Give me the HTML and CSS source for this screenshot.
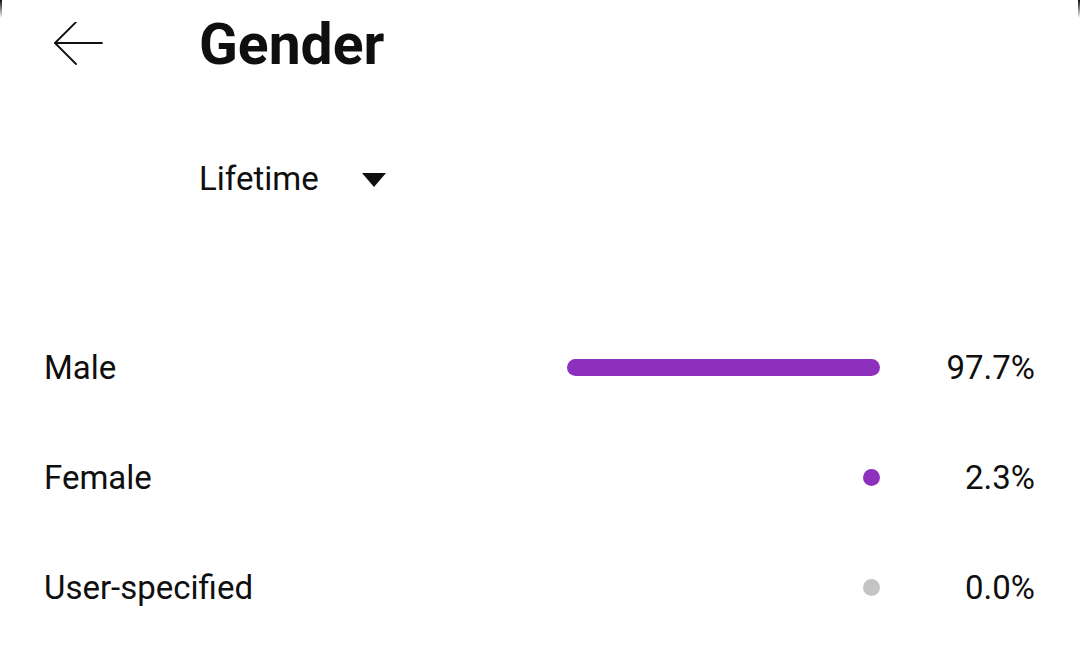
FILE: index.html
```html
<!DOCTYPE html>
<html lang="en">
<head>
<meta charset="utf-8">
<title>Gender</title>
<link rel="stylesheet" href="styles.css">
</head>
<body>
<div class="screen">
  <span class="edge edge-left"></span>
  <span class="edge edge-right"></span>
  <header class="header">
    <button class="back" aria-label="Back">
      <svg width="50" height="44" viewBox="0 0 50 44" fill="none" stroke="#111" stroke-width="1.8" stroke-linecap="round" stroke-linejoin="round">
        <path d="M1 21 H48"/>
        <path d="M22 0 L1 21 L22 42"/>
      </svg>
    </button>
    <h1 class="title">Gender</h1>
  </header>
  <div class="dropdown">
    <span class="dropdown-label">Lifetime</span>
    <span class="caret"></span>
  </div>
  <section class="rows">
    <div class="row">
      <span class="label">Male</span>
      <span class="track"><span class="bar" style="width:97.7%"></span></span>
      <span class="value">97.7%</span>
    </div>
    <div class="row">
      <span class="label">Female</span>
      <span class="track"><span class="bar" style="width:2.3%"></span></span>
      <span class="value">2.3%</span>
    </div>
    <div class="row">
      <span class="label">User-specified</span>
      <span class="track"><span class="bar bar-empty" style="width:0%"></span></span>
      <span class="value">0.0%</span>
    </div>
  </section>
</div>
</body>
</html>
```
FILE: styles.css
```css
* { box-sizing: border-box; }
html, body {
  margin: 0;
  padding: 0;
  background: #fff;
}
body {
  font-family: Roboto, "Noto Sans", "Liberation Sans", sans-serif;
  color: #0f0f0f;
}
.screen {
  position: relative;
  width: 1080px;
  height: 645px;
  overflow: hidden;
  background: #fff;
}
.edge {
  position: absolute;
  top: 0;
  width: 2px;
  height: 18px;
  background: linear-gradient(#111, rgba(0,0,0,0));
}
.edge-left { left: 0; }
.edge-right { right: 0; }

.header {
  display: flex;
  align-items: center;
  height: 88px;
}
.back {
  margin: 0 0 0 54px;
  padding: 0;
  border: 0;
  background: none;
  width: 50px;
  height: 44px;
  display: flex;
}
.title {
  margin: 0 0 0 95px;
  font-size: 57px;
  font-weight: 700;
  line-height: 1;
  letter-spacing: 0;
  color: #0f0f0f;
}
.dropdown {
  display: flex;
  align-items: center;
  height: 40px;
  margin: 70px 0 0 199px;
}
.dropdown-label {
  font-size: 33px;
  line-height: 1;
}
.caret {
  margin-left: 43px;
  width: 0;
  height: 0;
  border-left: 12px solid transparent;
  border-right: 12px solid transparent;
  border-top: 14px solid #0f0f0f;
  margin-top: 4px;
}
.rows {
  margin-top: 114px;
  padding: 0 45px 0 44px;
}
.row {
  display: grid;
  grid-template-columns: 1fr 320px 155px;
  align-items: center;
  height: 110px;
}
.label {
  font-size: 33px;
  line-height: 1;
}
.track {
  display: flex;
  justify-content: flex-end;
}
.bar {
  display: block;
  height: 17px;
  min-width: 17px;
  border-radius: 9px;
  background: #8d30bd;
}
.bar-empty { background: #c4c4c4; }
.value {
  font-size: 33px;
  line-height: 1;
  text-align: right;
}
```
